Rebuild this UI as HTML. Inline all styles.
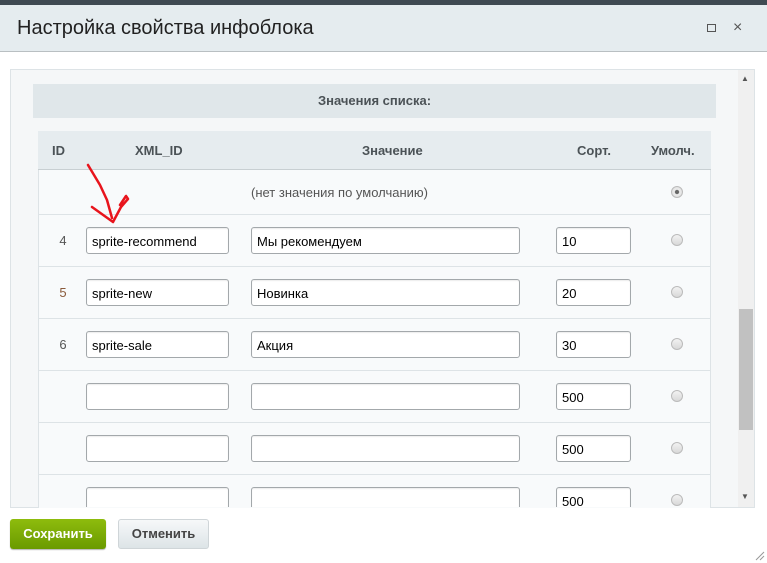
<!DOCTYPE html>
<html><head><meta charset="utf-8"><style>
*{box-sizing:border-box;margin:0;padding:0}
body{width:767px;height:563px;overflow:hidden;background:#fff;font-family:"Liberation Sans",sans-serif;position:relative;color:#333}
.a{position:absolute}
.inp{position:absolute;height:27px;border:1px solid #a3a8ab;border-radius:3px;background:#fff;font-size:13px;color:#000;padding:6px 0 0 5px;box-shadow:inset 0 1px 1px rgba(0,0,0,.08)}
.rad{position:absolute;width:12px;height:12px;border-radius:50%;border:1px solid #bbb;background:linear-gradient(#f2f2f2,#d8d8d8)}
.id{position:absolute;font-size:13px;color:#555;width:20px;text-align:center}
.hl{position:absolute;left:38px;width:673px;height:1px;background:#dde3e6}
</style></head><body>
<div class="a" style="left:0;top:0;width:767px;height:5px;background:#3f4a52"></div>
<div class="a" style="left:0;top:5px;width:767px;height:47px;background:#e5ecef;border-bottom:1px solid #b9bfc2"></div>
<div class="a" style="left:17px;top:17px;font-size:20px;color:#222">Настройка свойства инфоблока</div>
<div class="a" style="left:707px;top:24px;width:9px;height:8px;border:1px solid #555"></div>
<div class="a" style="left:733px;top:19px;font-size:16px;color:#555">×</div>
<div class="a" style="left:10px;top:69px;width:745px;height:439px;background:#f5f7f8;border:1px solid #dde3e6"></div>
<div class="a" style="left:738px;top:70px;width:16px;height:437px;background:#f0f0f0"></div>
<div class="a" style="left:739px;top:309px;width:14px;height:121px;background:#c1c1c1"></div>
<div class="a" style="left:741px;top:74px;font-size:8px;color:#555">▲</div>
<div class="a" style="left:741px;top:492px;font-size:8px;color:#555">▼</div>
<div class="a" style="left:33px;top:84px;width:683px;height:34px;background:#e0e7ea;text-align:center;font-size:13px;font-weight:bold;color:#4b5256;line-height:34px">Значения списка:</div>
<div class="a" style="left:38px;top:131px;width:673px;height:377px;background:#f8fafb;border:1px solid #dde3e6;border-bottom:none"></div>
<div class="a" style="left:38px;top:131px;width:673px;height:39px;background:#e6ecef;border-bottom:1px solid #c8cfd2;font-size:13px;font-weight:bold;color:#4b5256">
<span class="a" style="left:14px;top:12px">ID</span><span class="a" style="left:97px;top:12px">XML_ID</span><span class="a" style="left:324px;top:12px">Значение</span><span class="a" style="left:539px;top:12px">Сорт.</span><span class="a" style="left:613px;top:12px">Умолч.</span></div>
<div class="a" style="left:251px;top:185px;font-size:13px;color:#555">(нет значения по умолчанию)</div>
<div class="rad" style="left:671px;top:186px;background:radial-gradient(#666 25%,#eee 35%,#d5d5d5)"></div>
<div class="hl" style="top:214px"></div><div class="hl" style="top:266px"></div><div class="hl" style="top:318px"></div><div class="hl" style="top:370px"></div><div class="hl" style="top:422px"></div><div class="hl" style="top:474px"></div>
<div class="id" style="left:53px;top:233px">4</div>
<div class="id" style="left:53px;top:285px;color:#8a5a3a">5</div>
<div class="id" style="left:53px;top:337px">6</div>
<div class="inp" style="left:86px;top:227px;width:143px">sprite-recommend</div>
<div class="inp" style="left:251px;top:227px;width:269px">Мы рекомендуем</div>
<div class="inp" style="left:556px;top:227px;width:75px">10</div>
<div class="rad" style="left:671px;top:234px"></div>
<div class="inp" style="left:86px;top:279px;width:143px">sprite-new</div>
<div class="inp" style="left:251px;top:279px;width:269px">Новинка</div>
<div class="inp" style="left:556px;top:279px;width:75px">20</div>
<div class="rad" style="left:671px;top:286px"></div>
<div class="inp" style="left:86px;top:331px;width:143px">sprite-sale</div>
<div class="inp" style="left:251px;top:331px;width:269px">Акция</div>
<div class="inp" style="left:556px;top:331px;width:75px">30</div>
<div class="rad" style="left:671px;top:338px"></div>
<div class="inp" style="left:86px;top:383px;width:143px"></div>
<div class="inp" style="left:251px;top:383px;width:269px"></div>
<div class="inp" style="left:556px;top:383px;width:75px">500</div>
<div class="rad" style="left:671px;top:390px"></div>
<div class="inp" style="left:86px;top:435px;width:143px"></div>
<div class="inp" style="left:251px;top:435px;width:269px"></div>
<div class="inp" style="left:556px;top:435px;width:75px">500</div>
<div class="rad" style="left:671px;top:442px"></div>
<div class="a" style="left:11px;top:474px;width:727px;height:33px;overflow:hidden">
<div class="inp" style="left:75px;top:13px;width:143px"></div>
<div class="inp" style="left:240px;top:13px;width:269px"></div>
<div class="inp" style="left:545px;top:13px;width:75px">500</div>
<div class="rad" style="left:660px;top:20px"></div></div>
<svg class="a" style="left:0;top:0" width="767" height="563"><path d="M88 165 L100 185 L107 200 L112 218 M92 207 L113 222 L121 207 L128 199 L126 196 L120 205" stroke="#e8141c" stroke-width="2.5" fill="none" stroke-linecap="round" stroke-linejoin="round"/>
<path d="M756 560 L764 552 M760 560 L764 556" stroke="#999" stroke-width="1"/></svg>
<div class="a" style="left:10px;top:519px;width:96px;height:30px;border-radius:3px;background:linear-gradient(#8ebc0d,#6a9a00);color:#fff;font-size:13px;font-weight:bold;text-align:center;line-height:30px;box-shadow:0 1px 1px rgba(0,0,0,.3)">Сохранить</div>
<div class="a" style="left:118px;top:519px;width:91px;height:30px;border-radius:3px;background:linear-gradient(#f6f8f9,#dde4e7);border:1px solid #cfd5d8;color:#444;font-size:13px;font-weight:bold;text-align:center;line-height:28px">Отменить</div>
</body></html>
